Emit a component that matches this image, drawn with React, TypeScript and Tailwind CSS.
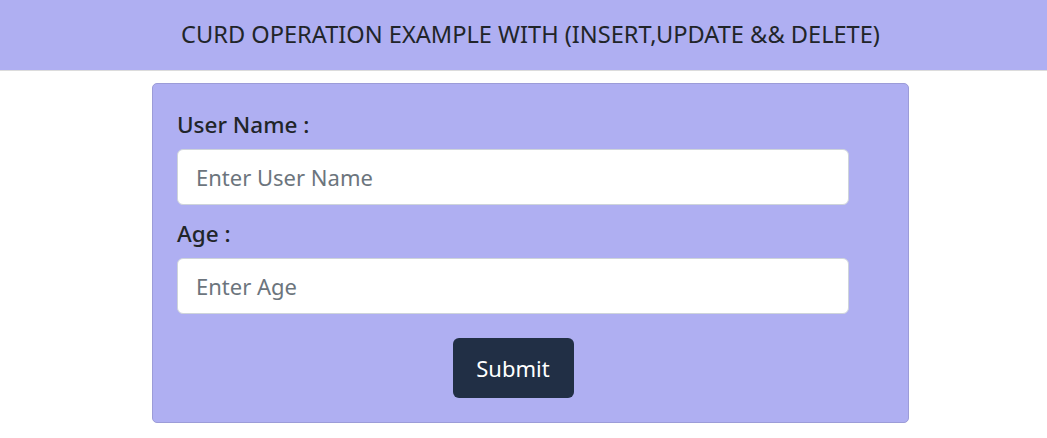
export default function App() {
  return (
    <div className="min-h-[438px] bg-white" style={{ fontFamily: '"Noto Sans", "Open Sans", sans-serif' }}>
      <header className="h-[71px] bg-[#afaff2] border-b border-[#dcdcdc] flex items-center justify-center pl-[14px]">
        <h1 className="text-[23.6px] text-[#212529] leading-none pb-[1px]">CURD OPERATION EXAMPLE WITH (INSERT,UPDATE &amp;&amp; DELETE)</h1>
      </header>
      <div className="ml-[152px] mt-[12px] w-[757px] h-[340px] bg-[#afaff2] border border-[#9c9cd8] rounded-[5px] pl-[24px] pt-[26px]">
        <form className="w-[672px] flex flex-col" onSubmit={(e) => e.preventDefault()}>
          <label className="text-[22.5px] font-medium text-[#212529] leading-[30px]">User Name :</label>
          <input
            className="mt-[9px] h-[56px] w-full bg-white border border-[#ced4da] rounded-[6px] px-[18px] text-[22px] text-[#212529] placeholder:text-[#6c757d] outline-none"
            placeholder="Enter User Name"
          />
          <label className="mt-[14px] text-[22.5px] font-medium text-[#212529] leading-[30px]">Age :</label>
          <input
            className="mt-[9px] h-[56px] w-full bg-white border border-[#ced4da] rounded-[6px] px-[18px] text-[22px] text-[#212529] placeholder:text-[#6c757d] outline-none"
            placeholder="Enter Age"
          />
          <div className="flex justify-center mt-[24px]">
            <button type="submit" className="w-[121px] h-[60px] bg-[#212f45] text-white text-[22px] rounded-[6px]">Submit</button>
          </div>
        </form>
      </div>
    </div>
  );
}
